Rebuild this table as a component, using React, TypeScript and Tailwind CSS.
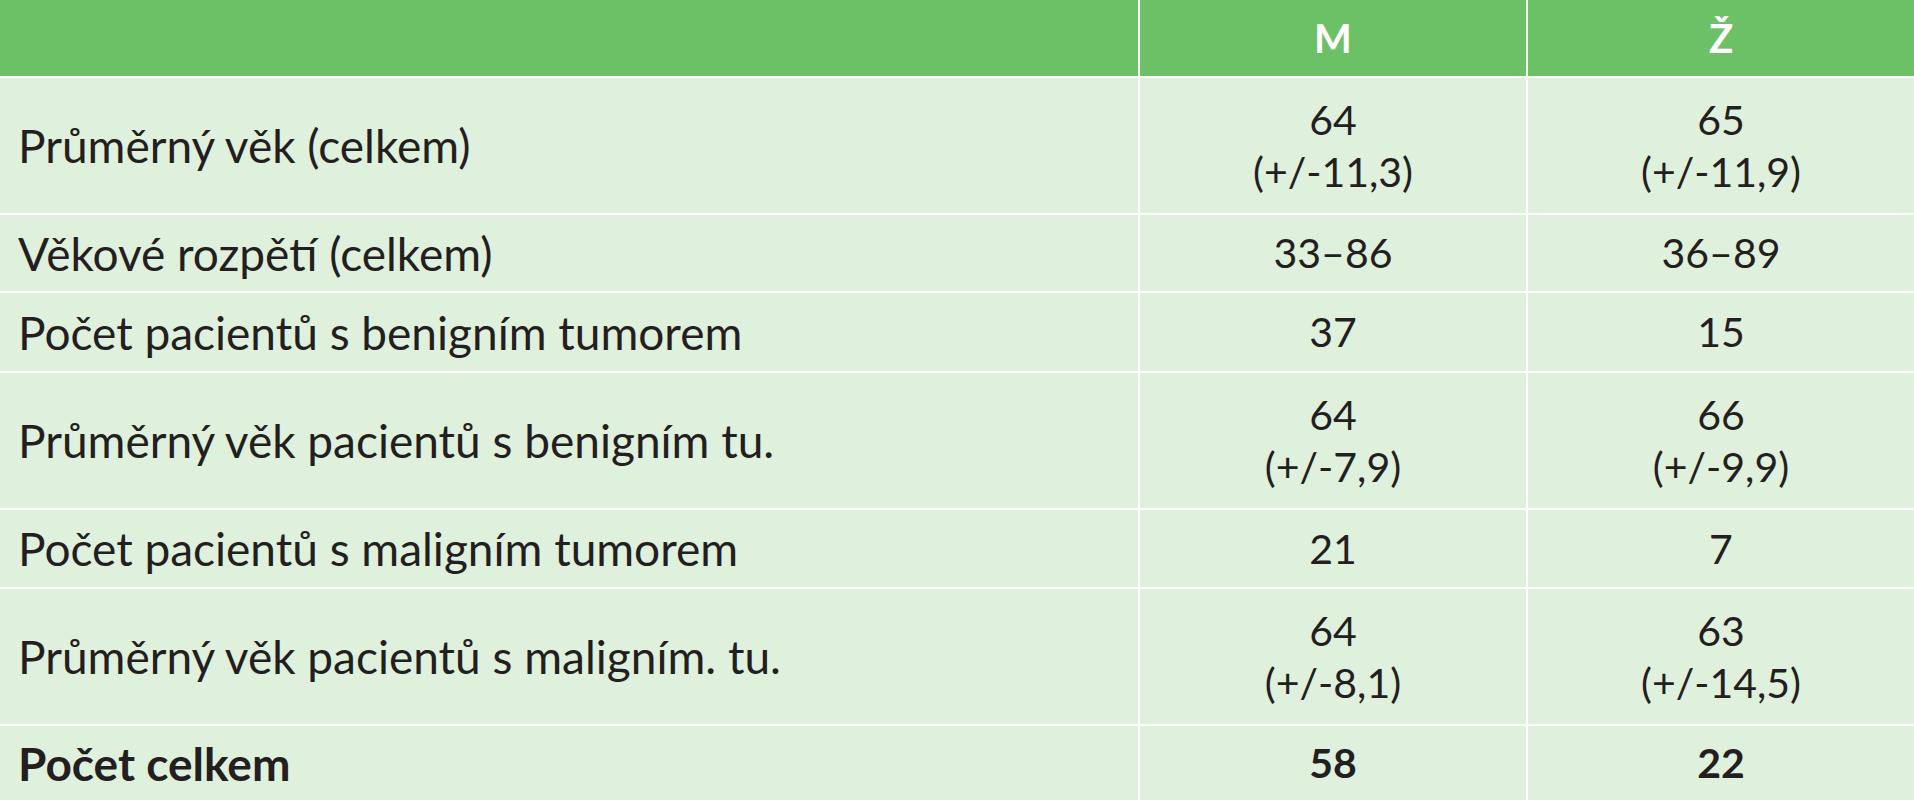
const rows: { label: string; m: string[]; z: string[]; h: string; bold?: boolean }[] = [
  { label: 'Průměrný věk (celkem)', m: ['64', '(+/-11,3)'], z: ['65', '(+/-11,9)'], h: 'h-[135px]' },
  { label: 'Věkové rozpětí (celkem)', m: ['33–86'], z: ['36–89'], h: 'h-[76px]' },
  { label: 'Počet pacientů s benigním tumorem', m: ['37'], z: ['15'], h: 'h-[78px]' },
  { label: 'Průměrný věk pacientů s benigním tu.', m: ['64', '(+/-7,9)'], z: ['66', '(+/-9,9)'], h: 'h-[135px]' },
  { label: 'Počet pacientů s maligním tumorem', m: ['21'], z: ['7'], h: 'h-[77px]' },
  { label: 'Průměrný věk pacientů s maligním. tu.', m: ['64', '(+/-8,1)'], z: ['63', '(+/-14,5)'], h: 'h-[135px]' },
  { label: 'Počet celkem', m: ['58'], z: ['22'], h: 'h-[74px]', bold: true },
];

function NumCell({ lines, h, bold }: { lines: string[]; h: string; bold?: boolean }) {
  return (
    <div className={`flex flex-col items-center justify-center bg-[#dff0dc] text-[41px] ${h} ${bold ? 'font-bold' : ''}`}>
      {lines.map((l) => (
        <div key={l} className="leading-[52px]">
          {l}
        </div>
      ))}
    </div>
  );
}

export default function App() {
  return (
    <div className="h-[800px] w-[1914px] overflow-hidden bg-white font-['Lato',sans-serif] text-[#231f20]">
      <div className="grid grid-cols-[1138px_386px_386px] gap-[2px]">
        <div className="h-[76px] bg-[#6cc167]" />
        <div className="flex h-[76px] items-center justify-center bg-[#6cc167] text-[40px] font-bold text-white">M</div>
        <div className="flex h-[76px] items-center justify-center bg-[#6cc167] text-[40px] font-bold text-white">Ž</div>

        {rows.map((r) => (
          <div key={r.label} className="contents">
            <div className={`flex items-center bg-[#dff0dc] pl-[18px] text-[46px] ${r.h} ${r.bold ? 'font-bold' : ''}`}>
              {r.label}
            </div>
            <NumCell lines={r.m} h={r.h} bold={r.bold} />
            <NumCell lines={r.z} h={r.h} bold={r.bold} />
          </div>
        ))}
      </div>
    </div>
  );
}
